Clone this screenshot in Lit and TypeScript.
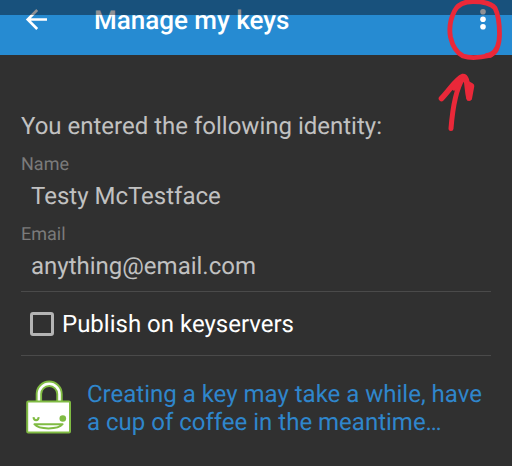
import { LitElement, html, css } from "lit";
import { customElement, property } from "lit/decorators.js";

@customElement("app-bar")
class AppBar extends LitElement {
  @property() heading = "";

  static styles = css`
    :host {
      display: block;
      position: relative;
      background: #268bd2;
      color: #fff;
    }
    .row {
      display: flex;
      align-items: center;
      height: 42px;
      padding: 0 21px 13px 24px;
    }
    .shade {
      position: absolute;
      inset: 0 0 auto 0;
      height: 15px;
      background: rgba(8, 10, 20, 0.45);
      pointer-events: none;
    }
    button {
      display: block;
      padding: 0;
      border: 0;
      background: none;
      color: inherit;
    }
    svg {
      display: block;
    }
    h1 {
      flex: 1;
      margin: 0 0 0 46px;
      font-size: 26px;
      line-height: 42px;
      font-weight: 500;
    }
  `;

  render() {
    return html`
      <div class="row">
        <button aria-label="Back">
          <svg width="24" height="24" viewBox="0 0 24 24" fill="none" stroke="currentColor" stroke-width="2.6">
            <path d="M23 10.5H4M13.2 1L3.7 10.5L13.2 20" />
          </svg>
        </button>
        <h1>${this.heading}</h1>
        <button aria-label="More options">
          <svg width="16" height="24" viewBox="0 0 16 24" fill="currentColor">
            <circle cx="8" cy="2.8" r="2.8" />
            <circle cx="8" cy="10.2" r="2.8" />
            <circle cx="8" cy="17.8" r="2.8" />
          </svg>
        </button>
      </div>
      <div class="shade"></div>
    `;
  }
}

@customElement("app-root")
class AppRoot extends LitElement {
  static styles = css`
    :host {
      display: block;
      position: relative;
      min-height: 100vh;
      background: #303030;
      color: #c1c1c1;
      font-family: Roboto, "Liberation Sans", sans-serif;
      font-size: 24px;
      line-height: 28px;
      text-rendering: geometricPrecision;
      overflow: hidden;
    }
    main {
      padding: 57px 21px 0;
    }
    p,
    dl,
    dd {
      margin: 0;
    }
    dt {
      padding-top: 14px;
      font-size: 18px;
      line-height: 22px;
      color: #7b7b7b;
    }
    dd {
      padding: 6px 0 0 10px;
    }
    .publish {
      display: flex;
      align-items: center;
      gap: 8px;
      height: 63px;
      margin-top: 11px;
      padding-left: 9px;
      border: solid #4a4a4a;
      border-width: 1px 0;
      color: #fff;
    }
    input {
      appearance: none;
      box-sizing: border-box;
      width: 24px;
      height: 24px;
      margin: 0;
      border: 3px solid #b4b4b4;
      border-radius: 3px;
    }
    .note {
      display: flex;
      gap: 15px;
      padding: 24px 0;
      color: #2f86cc;
    }
    .lock {
      flex: none;
      margin-left: 5px;
    }
    .mark {
      position: absolute;
      top: 0;
      right: 0;
      pointer-events: none;
    }
  `;

  render() {
    return html`
      <app-bar heading="Manage my keys"></app-bar>
      <main>
        <p>You entered the following identity:</p>
        <dl>
          <dt>Name</dt>
          <dd>Testy McTestface</dd>
          <dt>Email</dt>
          <dd>anything@email.com</dd>
        </dl>
        <label class="publish">
          <input type="checkbox" />
          <span>Publish on keyservers</span>
        </label>
        <div class="note">
          <svg class="lock" width="46" height="54" viewBox="0 0 46 54" fill="none">
            <path d="M12.9 23V14.1a10.3 10.3 0 0 1 20.6 0V23" stroke="#80bb43" stroke-width="6.4" />
            <path d="M12.9 23V14.1a10.3 10.3 0 0 1 20.6 0V23" stroke="#fff" stroke-width="2.6" />
            <rect x="1.2" y="21.5" width="42.8" height="31" rx="1" fill="#fff" stroke="#80bb43" stroke-width="2" />
            <path d="M7.5 37.2c.4 4 4.8 4 5.2 0" stroke="#80bb43" stroke-width="2" />
            <circle cx="36.8" cy="38.5" r="3.3" fill="#80bb43" />
            <path d="M8.4 44.2H36.6C32 49.8 13 49.8 8.4 44.2Z" stroke="#80bb43" stroke-width="2" stroke-linejoin="round" />
          </svg>
          <p>Creating a key may take a while, have a cup of coffee in the meantime…</p>
        </div>
      </main>
      <svg class="mark" width="92" height="140" viewBox="0 0 92 140" fill="none" stroke="#ea2839" stroke-linecap="round" stroke-linejoin="round" aria-hidden="true">
        <path stroke-width="4.8" d="M75 8C71 3 62 1.5 53 1.5C45 1.5 38 4 34.5 11C30 20 29 29 30.500 37C32.5 46 37 53 43 56C50 58.5 63 57 70 55.5C77 52 79.5 44 79.5 34C79.5 25 78 14 75 8Z" />
        <path stroke-width="5" d="M67 55.5C72 55 74 53 76 50" />
        <path stroke-width="5" d="M31 128.5C32 116 34 92 43 78" />
        <path stroke-width="5.6" d="M21.500 98.5C29 91 36 79 43 76.500C48 76.5 46.5 88 49 98" />
        <path stroke-width="5.6" fill="#ea2839" d="M49.3 98L51.5 86L48 84Z" />
        <path stroke-width="5" d="M34 88L43 79" />
      </svg>
    `;
  }
}
